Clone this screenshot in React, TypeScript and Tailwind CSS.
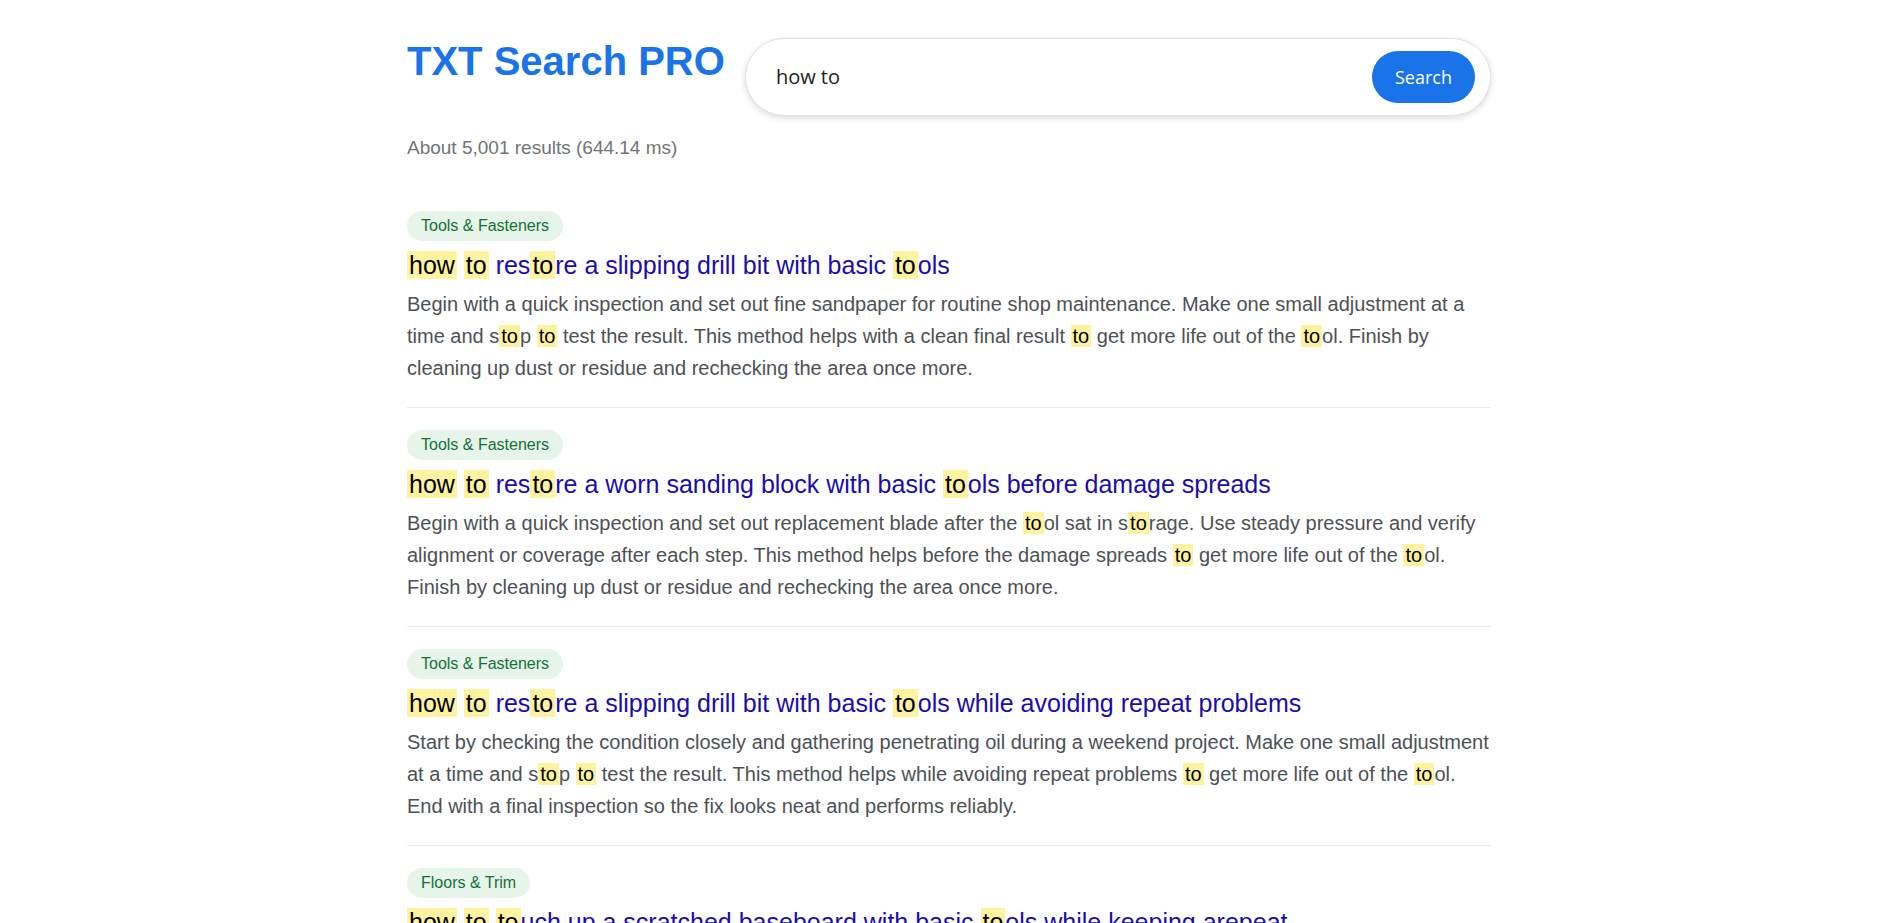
import { Fragment } from "react";

type Result = {
  tag: string;
  title: string;
  snippet: string;
};

const results: Result[] = [
  {
    tag: "Tools & Fasteners",
    title: "how to restore a slipping drill bit with basic tools",
    snippet:
      "Begin with a quick inspection and set out fine sandpaper for routine shop maintenance. Make one small adjustment at a time and stop to test the result. This method helps with a clean final result to get more life out of the tool. Finish by cleaning up dust or residue and rechecking the area once more.",
  },
  {
    tag: "Tools & Fasteners",
    title: "how to restore a worn sanding block with basic tools before damage spreads",
    snippet:
      "Begin with a quick inspection and set out replacement blade after the tool sat in storage. Use steady pressure and verify alignment or coverage after each step. This method helps before the damage spreads to get more life out of the tool. Finish by cleaning up dust or residue and rechecking the area once more.",
  },
  {
    tag: "Tools & Fasteners",
    title: "how to restore a slipping drill bit with basic tools while avoiding repeat problems",
    snippet:
      "Start by checking the condition closely and gathering penetrating oil during a weekend project. Make one small adjustment at a time and stop to test the result. This method helps while avoiding repeat problems to get more life out of the tool. End with a final inspection so the fix looks neat and performs reliably.",
  },
  {
    tag: "Floors & Trim",
    title: "how to touch up a scratched baseboard with basic tools while keeping arepeat",
    snippet:
      "Begin with a quick inspection and set out wood filler for a cleaner finish. Work slowly along the edge and check the color match after each pass. This method helps while keeping a neat line to get more life out of the trim. Finish by wiping down the surface and rechecking the area once more.",
  },
];

const Highlight = ({ text }: { text: string }) => {
  const parts = text.split(/(how|to)/gi);
  return (
    <>
      {parts.map((part, i) =>
        /^(how|to)$/i.test(part) ? (
          <mark key={i} className="bg-[#fff3a0] text-black px-[2px]">
            {part}
          </mark>
        ) : (
          <Fragment key={i}>{part}</Fragment>
        )
      )}
    </>
  );
};

const ResultItem = ({ item }: { item: Result }) => (
  <div className="pt-[22px] pb-[23px] border-b border-[#ebebeb]">
    <span className="inline-flex items-center h-[30px] px-[14px] rounded-full bg-[#e6f4ea] text-[#137333] text-[16px]">
      {item.tag}
    </span>
    <h3 className="mt-2 text-[25px] leading-[32px] text-[#1a0dab]">
      <Highlight text={item.title} />
    </h3>
    <p className="mt-[7px] text-[20px] leading-[32px] text-[#4d5156]">
      <Highlight text={item.snippet} />
    </p>
  </div>
);

export default function App() {
  return (
    <div className="min-h-screen bg-white font-['Liberation_Sans',Arial,sans-serif]">
      <div className="mx-auto w-[1084px] pt-[38px]">
        <header className="flex items-start gap-5">
          <h1 className="text-[40px] leading-[1.15] font-bold text-[#1a73e8] whitespace-nowrap">
            TXT Search PRO
          </h1>

          <form
            className="flex-1 flex items-center h-[78px] pl-[30px] pr-[15px] rounded-full border border-[#dfe1e5] bg-white shadow-[0_2px_6px_rgba(32,33,36,0.16)]"
            onSubmit={(e) => e.preventDefault()}
          >
            <input
              defaultValue="how to"
              className="flex-1 bg-transparent outline-none text-[20px] text-[#202124] font-['Open_Sans',sans-serif]"
            />
            <button
              type="submit"
              className="h-[52px] w-[103px] rounded-full bg-[#1a73e8] text-white text-[18px] font-['Open_Sans',sans-serif]"
            >
              Search
            </button>
          </form>
        </header>

        <p className="mt-[18px] text-[19px] leading-[28px] text-[#70757a]">
          About 5,001 results (644.14 ms)
        </p>

        <div className="mt-[27px]">
          {results.map((item, i) => (
            <ResultItem key={i} item={item} />
          ))}
        </div>
      </div>
    </div>
  );
}
